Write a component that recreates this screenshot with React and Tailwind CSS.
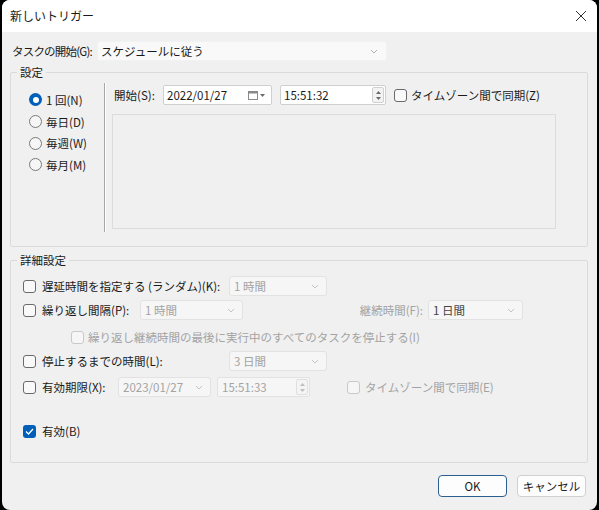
import React from "react"

function Chevron({ color = "#8a8a8a" }) {
  return (
    <svg width="8" height="5" viewBox="0 0 8 5" className="shrink-0">
      <polyline points="1,1 4,4 7,1" fill="none" stroke={color} strokeWidth="1" />
    </svg>
  )
}

function Select({ value, width, disabled, darkText }) {
  return (
    <div
      className={`h-[20px] shrink-0 flex items-center justify-between pl-[4px] pr-[7px] rounded-[3px] border ${
        disabled ? "bg-[#f6f6f6] border-[#e2e2e2]" : "bg-[#fbfbfb] border-[#ececec]"
      } ${darkText ? "text-[#444]" : disabled ? "text-[#a3a3a3]" : "text-[#1a1a1a]"}`}
      style={{ width }}
    >
      <span>{value}</span>
      <Chevron color={disabled ? "#c4c4c4" : "#9a9a9a"} />
    </div>
  )
}

function Checkbox({ checked, disabled, className = "" }) {
  if (checked) {
    return (
      <div className={`w-[13px] h-[13px] rounded-[3px] bg-[#005fb8] flex items-center justify-center shrink-0 ${className}`}>
        <svg width="9" height="7" viewBox="0 0 9 7">
          <polyline points="1,3.5 3.5,6 8,1" fill="none" stroke="#fff" strokeWidth="1.3" />
        </svg>
      </div>
    )
  }
  return (
    <div
      className={`w-[13px] h-[13px] rounded-[3px] border shrink-0 ${
        disabled ? "border-[#c9c9c9] bg-[#f6f6f6]" : "border-[#6a6a6a] bg-[#f9f9f9]"
      } ${className}`}
    />
  )
}

function Radio({ checked }) {
  if (checked) {
    return (
      <div className="w-[13px] h-[13px] rounded-full bg-[#005fb8] flex items-center justify-center shrink-0">
        <div className="w-[6px] h-[6px] rounded-full bg-white" />
      </div>
    )
  }
  return <div className="w-[13px] h-[13px] rounded-full border border-[#7a7a7a] bg-[#f6f6f6] shrink-0" />
}

function Spinner({ disabled }) {
  const c = disabled ? "#bdbdbd" : "#6a6a6a"
  return (
    <div
      className={`w-[12px] h-[16px] flex flex-col items-center justify-center gap-[3px] border rounded-[2px] ${
        disabled ? "border-[#e0e0e0] bg-[#f4f4f4]" : "border-[#d0d0d0] bg-[#f3f3f3]"
      }`}
    >
      <svg width="5" height="3" viewBox="0 0 5 3">
        <polygon points="0,3 2.5,0 5,3" fill={c} />
      </svg>
      <svg width="5" height="3" viewBox="0 0 5 3">
        <polygon points="0,0 2.5,3 5,0" fill={c} />
      </svg>
    </div>
  )
}

function CalendarIcon() {
  return (
    <div className="flex items-center gap-[2px]">
      <svg width="10" height="10" viewBox="0 0 10 10">
        <rect x="0.5" y="1.5" width="9" height="8" fill="none" stroke="#8a8a8a" />
        <rect x="0.5" y="1.5" width="9" height="2" fill="#8a8a8a" />
      </svg>
      <svg width="5" height="3" viewBox="0 0 5 3">
        <polygon points="0,0 2.5,3 5,0" fill="#6a6a6a" />
      </svg>
    </div>
  )
}

export default function App() {
  return (
    <div className="w-[599px] h-[510px] bg-black px-[2px] whitespace-nowrap font-['Noto_Sans_CJK_JP','Noto_Sans',sans-serif] text-[11.5px] leading-[16px] text-[#1a1a1a]">
      <div className="w-[595px] h-[510px] rounded-[8px] overflow-hidden bg-[#f0f0f0] flex flex-col">
        {/* Title bar */}
        <div className="h-[32px] bg-white flex items-center justify-between pl-[8px] pr-[10px] shrink-0">
          <span className="text-[12px]">新しいトリガー</span>
          <svg width="12" height="12" viewBox="0 0 12 12">
            <path d="M1 1 L11 11 M11 1 L1 11" stroke="#333" strokeWidth="1" />
          </svg>
        </div>

        <div className="pl-[8px] pr-[9px] flex flex-col">
          {/* Task start */}
          <div className="mt-[9px] h-[20px] flex items-center pl-[2px]">
            <span className="w-[85px] shrink-0 tracking-[-0.8px]">タスクの開始(G):</span>
            <div className="w-[290px] h-[20px] bg-[#f9f9f9] rounded-[3px] border border-[#f2f2f2] flex items-center justify-between pl-[3px] pr-[8px]">
              <span>スケジュールに従う</span>
              <Chevron color="#b0b0b0" />
            </div>
          </div>

          {/* Settings group */}
          <fieldset className="mt-[3px] border border-[#dadada] rounded-[2px]">
            <legend className="ml-[6px] px-[3px]">設定</legend>
            <div className="flex pt-[3px] pb-[14px]">
              <div className="w-[93px] pl-[18px] pt-[6px] flex flex-col">
                {[
                  ["1 回(N)", true],
                  ["毎日(D)", false],
                  ["毎週(W)", false],
                  ["毎月(M)", false],
                ].map(([label, checked]) => (
                  <div key={label} className="h-[21.7px] flex items-center gap-[4px]">
                    <Radio checked={checked} />
                    <span>{label}</span>
                  </div>
                ))}
              </div>
              <div className="w-[2px] h-[149px] border-l border-[#a6a6a6] border-r border-r-white" />
              <div className="pl-[6px] pt-[2px] flex flex-col">
                <div className="h-[20px] flex items-center">
                  <span className="ml-[2px] w-[49px] shrink-0">開始(S):</span>
                  <div className="w-[109px] h-[20px] bg-white border border-[#cfcfcf] rounded-[2px] flex items-center justify-between pl-[3px] pr-[6px]">
                    <span>2022/01/27</span>
                    <CalendarIcon />
                  </div>
                  <div className="ml-[8px] w-[106px] h-[20px] bg-white border border-[#cfcfcf] rounded-[2px] flex items-center justify-between pl-[3px] pr-[1px]">
                    <span>15:51:32</span>
                    <Spinner />
                  </div>
                  <div className="ml-[8px] flex items-center gap-[4px]">
                    <Checkbox />
                    <span>タイムゾーン間で同期(Z)</span>
                  </div>
                </div>
                <div className="mt-[9px] w-[444px] h-[115px] border border-[#dcdcdc]" />
              </div>
            </div>
          </fieldset>

          {/* Advanced settings group */}
          <fieldset className="mt-[5px] border border-[#dadada] rounded-[2px]">
            <legend className="ml-[6px] px-[3px]">詳細設定</legend>
            <div className="pt-[6px] pb-[19px] pl-[12px] flex flex-col">
              <div className="h-[24px] flex items-center">
                <Checkbox />
                <span className="ml-[6px] w-[187px] shrink-0">遅延時間を指定する (ランダム)(K):</span>
                <Select value="1 時間" width={98} disabled />
              </div>
              <div className="h-[24px] flex items-center">
                <Checkbox />
                <span className="ml-[6px] w-[98px] shrink-0">繰り返し間隔(P):</span>
                <Select value="1 時間" width={103} disabled />
                <span className="w-[185px] shrink-0 text-right pr-[5px] text-[#a3a3a3]">継続時間(F):</span>
                <Select value="1 日間" width={95} disabled darkText />
              </div>
              <div className="mt-[3px] h-[24px] flex items-center">
                <Checkbox disabled className="ml-[48px]" />
                <span className="ml-[4px] text-[#a3a3a3]">
                  繰り返し継続時間の最後に実行中のすべてのタスクを停止する(I)
                </span>
              </div>
              <div className="h-[24px] flex items-center">
                <Checkbox />
                <span className="ml-[6px] w-[187px] shrink-0">停止するまでの時間(L):</span>
                <Select value="3 日間" width={98} disabled />
              </div>
              <div className="mt-[2px] h-[24px] flex items-center">
                <Checkbox />
                <span className="ml-[6px] w-[76px] shrink-0">有効期限(X):</span>
                <Select value="2023/01/27" width={93} disabled />
                <div className="ml-[6px] w-[93px] h-[20px] shrink-0 bg-[#f6f6f6] border border-[#e2e2e2] rounded-[2px] flex items-center justify-between pl-[4px] pr-[1px] text-[#a3a3a3]">
                  <span>15:51:33</span>
                  <Spinner disabled />
                </div>
                <Checkbox disabled className="ml-[37px]" />
                <span className="ml-[5px] text-[#a3a3a3]">タイムゾーン間で同期(E)</span>
              </div>
              <div className="mt-[20px] h-[24px] flex items-center">
                <Checkbox checked />
                <span className="ml-[6px]">有効(B)</span>
              </div>
            </div>
          </fieldset>

          {/* Buttons */}
          <div className="mt-[12px] mr-[2px] flex justify-end gap-[10px]">
            <button className="w-[69px] h-[22px] rounded-[4px] bg-[#fdfdfd] border-[1.5px] border-[#2b5f8f] text-[#1a1a1a]">
              OK
            </button>
            <button className="w-[69px] h-[22px] rounded-[4px] bg-[#fdfdfd] border border-[#d0d0d0] text-[#1a1a1a]">
              キャンセル
            </button>
          </div>
        </div>
      </div>
    </div>
  )
}
